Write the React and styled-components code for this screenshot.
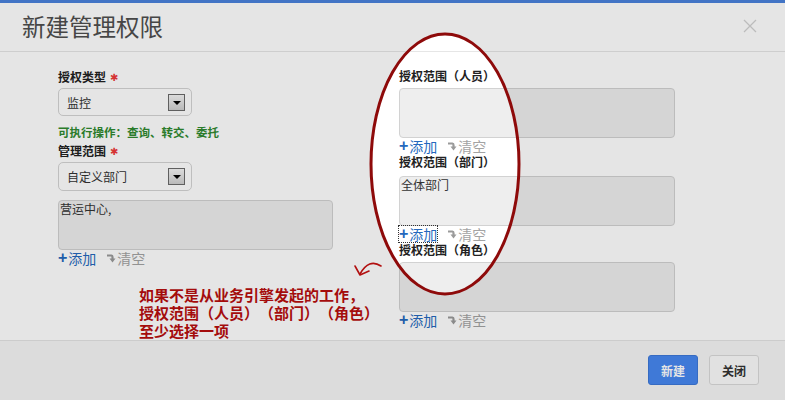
import React from "react";
import styled, { createGlobalStyle } from "styled-components";

const Global = createGlobalStyle`
  html, body { margin: 0; padding: 0; background: #fff; }
  #root { width: 785px; height: 400px; }
  * { box-sizing: border-box; }
`;

const CJK = `"Noto Sans CJK SC", "Liberation Sans", sans-serif`;

const Dialog = styled.div`
  position: relative;
  width: 785px;
  height: 400px;
  display: flex;
  flex-direction: column;
  background: #fff;
  font-family: ${CJK};
  overflow: hidden;
`;

const Header = styled.div`
  height: 52px;
  border-top: 3px solid #4a82dc;
  border-bottom: 1px solid #e6e6e6;
  padding: 0 28px 0 22px;
  display: flex;
  align-items: center;
  justify-content: space-between;
`;

const Title = styled.h1`
  margin: 0;
  font-size: 23.5px;
  font-weight: 400;
  color: #4e4e4e;
  line-height: 1;
  margin-top: -1px;
`;

const CloseBtn = styled.span`
  display: flex;
  width: 14px;
  height: 14px;
  margin-top: -2px;
`;

const Body = styled.div`
  flex: 1;
  display: grid;
  grid-template-columns: 275px 276px;
  column-gap: 66px;
  padding-left: 58px;
`;

const Column = styled.div`
  display: flex;
  flex-direction: column;
  padding-top: ${(p) => p.$top}px;
`;

const Label = styled.div`
  height: 16px;
  line-height: 16px;
  font-size: 12px;
  font-weight: 700;
  color: #222;
  margin-bottom: ${(p) => p.$gap ?? 3}px;
  display: flex;
  align-items: center;
`;

const Star = styled.span`
  color: #ee3a3a;
  font-size: 10px;
  margin-left: 4px;
  font-weight: 400;
`;

const Select = styled.div`
  width: 134px;
  height: ${(p) => p.$h}px;
  border: 1px solid #d4d4d4;
  border-radius: 5px;
  display: flex;
  align-items: center;
  justify-content: space-between;
  padding: 0 6px 0 8px;
  font-size: 12px;
  color: #333;
`;

const DropBtn = styled.span`
  width: 17px;
  height: 17px;
  border: 1px solid #6a6a6a;
  background: linear-gradient(#f4f4f4, #cfcfcf);
  display: flex;
  align-items: center;
  justify-content: center;
  &::after {
    content: "";
    border-left: 4px solid transparent;
    border-right: 4px solid transparent;
    border-top: 4px solid #000;
    margin-top: 1px;
  }
`;

const Hint = styled.div`
  height: 16px;
  line-height: 16px;
  margin-top: 8px;
  font-size: 11.5px;
  font-weight: 700;
  color: #2f8a2f;
  margin-bottom: 3px;
`;

const Box = styled.div`
  width: 100%;
  height: 50px;
  border: 1px solid #d2d2d2;
  border-radius: 4px;
  background: #eeeeee;
  padding: 1px 1px;
  font-size: 12px;
  line-height: 14px;
  color: #333;
  margin-top: ${(p) => p.$mt ?? 0}px;
`;

const ActionRow = styled.div`
  height: 16px;
  display: flex;
  align-items: center;
  font-size: 14px;
  line-height: 16px;
`;

const AddLink = styled.span`
  display: flex;
  align-items: center;
  color: #2468bd;
  outline: ${(p) => (p.$focus ? "1px dotted #333" : "none")};
  outline-offset: 0px;
  height: 16px;
`;

const Plus = styled.span`
  font-family: "Liberation Sans", sans-serif;
  font-weight: 700;
  font-size: 16px;
  margin-right: 1px;
`;

const ClearLink = styled.span`
  display: flex;
  align-items: center;
  color: #a3a3a3;
  margin-left: 10px;
  gap: 1px;
`;

const Note = styled.div`
  position: relative;
  z-index: 3;
  margin-top: 20px;
  margin-left: 81px;
  width: 260px;
  font-size: 15px;
  font-weight: 700;
  line-height: 18px;
  color: #a40c0c;
  white-space: nowrap;
  text-spacing-trim: space-all;
`;

const Footer = styled.div`
  height: 60px;
  border-top: 1px solid #e4e4e4;
  background: #f5f5f5;
  display: flex;
  align-items: center;
  justify-content: flex-end;
  padding: 0 26px 0 0;
  gap: 11px;
`;

const Button = styled.button`
  width: 50px;
  height: 30px;
  border-radius: 3px;
  font-family: ${CJK};
  font-size: 12px;
  font-weight: 700;
  padding: 0;
  margin-top: -1px;
  cursor: pointer;
  border: 1px solid ${(p) => (p.$primary ? "#3d78d8" : "#dadada")};
  background: ${(p) => (p.$primary ? "#4787f0" : "#fbfbfb")};
  color: ${(p) => (p.$primary ? "#fff" : "#333")};
`;

const Overlay = styled.svg`
  position: absolute;
  left: 0;
  top: 0;
  pointer-events: none;
  z-index: ${(p) => p.$z};
`;

const ClearIcon = () => (
  <svg width="10" height="11" viewBox="0 0 10 11">
    <path d="M1 2.5 H5.5 Q6.5 2.5 6.5 4 V6" stroke="#9a9a9a" strokeWidth="2.2" fill="none" />
    <path d="M3.5 5.5 H9.5 L6.5 9.5 Z" fill="#9a9a9a" />
  </svg>
);

const Actions = ({ focus }) => (
  <ActionRow>
    <AddLink $focus={focus}>
      <Plus>+</Plus>添加
    </AddLink>
    <ClearLink>
      <ClearIcon />
      清空
    </ClearLink>
  </ActionRow>
);

const cx = 445, cy = 164, rx = 74, ry = 130;
const ellipsePath = `M${cx - rx} ${cy} a${rx} ${ry} 0 1 0 ${2 * rx} 0 a${rx} ${ry} 0 1 0 ${-2 * rx} 0 Z`;

export default function App() {
  return (
    <>
      <Global />
      <Dialog>
        <Header>
          <Title>新建管理权限</Title>
          <CloseBtn>
            <svg width="14" height="14" viewBox="0 0 14 14">
              <path d="M1 1 L13 13 M13 1 L1 13" stroke="#d2d2d2" strokeWidth="1.3" />
            </svg>
          </CloseBtn>
        </Header>
        <Body>
          <Column $top={17}>
            <Label>
              授权类型<Star>✱</Star>
            </Label>
            <Select $h={28}>
              监控
              <DropBtn />
            </Select>
            <Hint>可执行操作：查询、转交、委托</Hint>
            <Label>
              管理范围<Star>✱</Star>
            </Label>
            <Select $h={29}>
              自定义部门
              <DropBtn />
            </Select>
            <Box $mt={9}>营运中心,</Box>
            <Actions />
            <Note>
              如果不是从业务引擎发起的工作，
              <br />
              授权范围（人员）（部门）（角色）
              <br />
              至少选择一项
            </Note>
          </Column>
          <Column $top={16}>
            <Label $gap={4}>授权范围（人员）</Label>
            <Box />
            <Actions />
            <Label $gap={6}>授权范围（部门）</Label>
            <Box>全体部门</Box>
            <Actions focus />
            <Label $gap={4}>授权范围（角色）</Label>
            <Box />
            <Actions />
          </Column>
        </Body>
        <Footer>
          <Button $primary>新建</Button>
          <Button>关闭</Button>
        </Footer>
        <Overlay $z={2} width="785" height="400" viewBox="0 0 785 400">
          <path d={`M0 0 H785 V400 H0 Z ${ellipsePath}`} fill="rgba(0,0,0,0.1)" fillRule="evenodd" />
          <path d={ellipsePath} fill="none" stroke="#8e0a0a" strokeWidth="3" />
        </Overlay>
        <Overlay $z={4} width="785" height="400" viewBox="0 0 785 400">
          <path d="M381 266 Q369 258 360 274" fill="none" stroke="#b21010" strokeWidth="1.6" strokeLinecap="round" />
          <path d="M355 266 L360 275 L369 271" fill="none" stroke="#b21010" strokeWidth="1.6" strokeLinecap="round" strokeLinejoin="round" />
        </Overlay>
      </Dialog>
    </>
  );
}
